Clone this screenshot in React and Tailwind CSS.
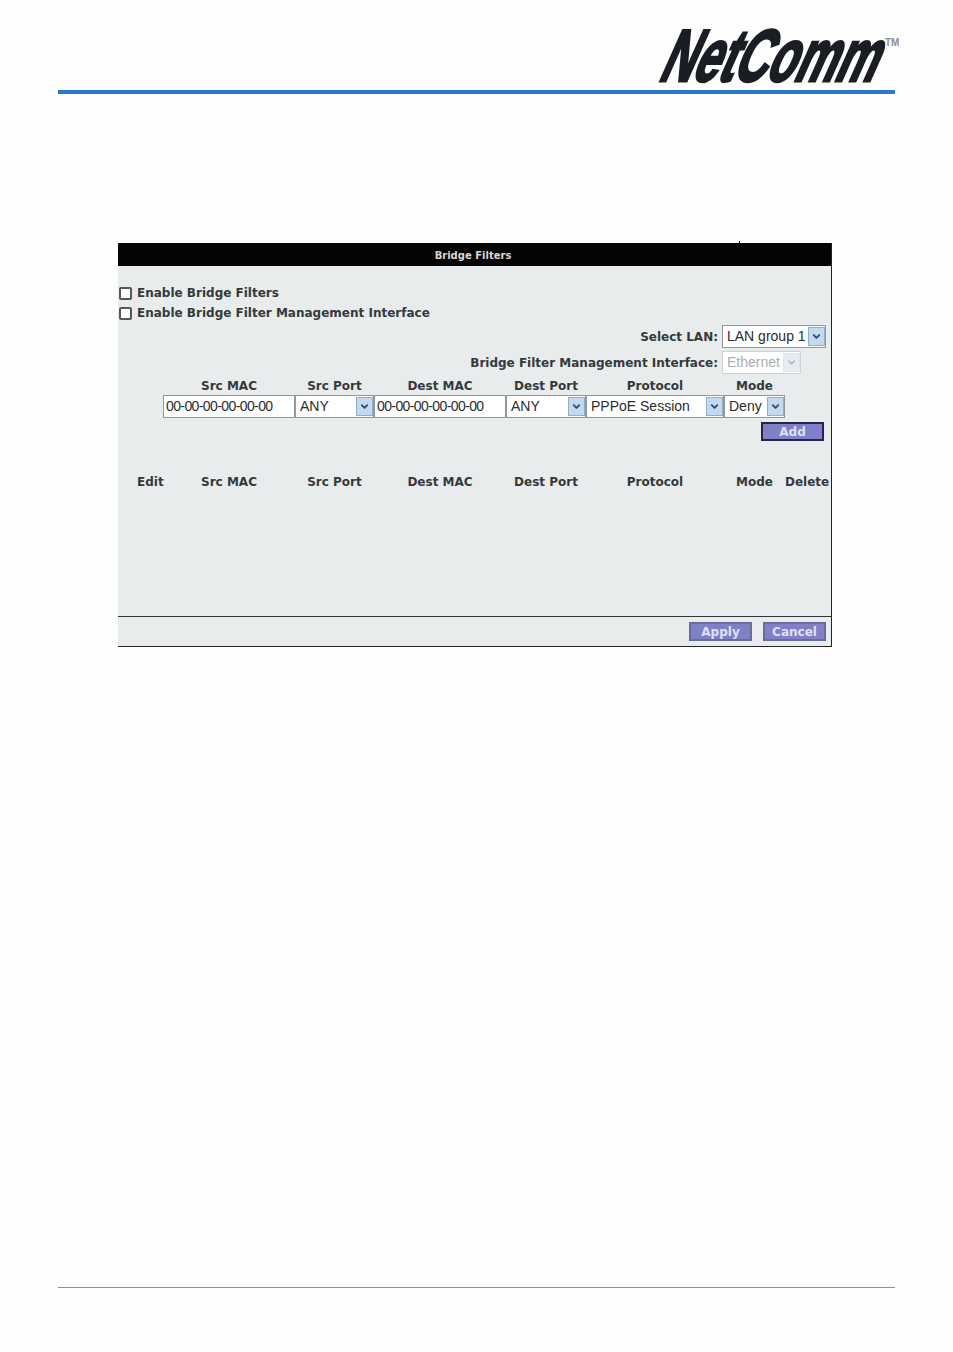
import { ChevronDown } from "lucide-react";

const heads = ["Src MAC", "Src Port", "Dest MAC", "Dest Port", "Protocol", "Mode"];

const Logo = () => (
    <svg width="241" height="56" viewBox="0 0 241 56" className="block overflow-visible">
        <text
            transform="translate(-2 54) skewX(-24) scale(0.61 0.98)"
            className="font-['Liberation_Sans'] font-bold fill-[#1a1d24] stroke-[#1a1d24]"
            fontSize="75"
            strokeWidth="3"
        >
            NetComm
        </text>
        <text x="226" y="19" className="font-['Liberation_Sans'] fill-[#8a8d90]" fontSize="10">TM</text>
    </svg>
);

const Arrow = ({ off }) => (
    <span className={`flex h-full w-[17px] shrink-0 items-center justify-center border ${off ? "border-[#dfe5e8] bg-[#e6edf2]" : "border-[#8fb0cc] bg-[#c3d9ee]"}`}>
        <ChevronDown size={11} strokeWidth={4} className={off ? "text-[#b4bcc2]" : "text-[#2b4a78]"} />
    </span>
);

const Select = ({ text, off, className }) => (
    <div className={`flex h-[23px] items-center border bg-white py-px pl-px font-['Liberation_Sans'] text-[14px] font-normal whitespace-nowrap ${off ? "border-[#cfd3d5] text-[#a8aeb2]" : "border-[#8e9aa0] text-[#2c2c2c]"} ${className}`}>
        <span className="flex-1 pl-[3px]">{text}</span>
        <Arrow off={off} />
    </div>
);

const MacInput = () => (
    <div className="flex h-[23px] items-center border border-[#8e9aa0] bg-white pl-[2px] font-['Liberation_Sans'] text-[14px] font-normal tracking-[-0.6px] text-[#2c2c2c]">
        00-00-00-00-00-00
    </div>
);

const Button = ({ label, className }) => (
    <button className={`h-[19px] border-2 bg-[#7f80c8] text-center text-[12px] leading-none font-bold text-[#dfe2f2] ${className}`}>
        {label}
    </button>
);

const Check = ({ label }) => (
    <label className="flex h-[20px] items-center gap-[5px]">
        <span className="ml-px h-[13px] w-[13px] rounded-[2px] border-2 border-[#55585a] bg-white" />
        {label}
    </label>
);

export default function App() {
    return (
        <div className="h-[1352px] bg-[#fefefe] px-[58px] font-['DejaVu_Sans'] text-[12px] font-bold text-[#343a3c]">
            <div className="flex h-[90px] items-end justify-end pb-[7px]">
                <div className="mr-[-5px]">
                    <Logo />
                </div>
            </div>
            <div className="h-1 bg-[#2d78c8]" />

            <div className="mt-[149px] ml-[60px] w-[714px] border-r border-b border-[#222] bg-[#e8ecec]">
                <div className="relative flex h-[23px] items-center justify-center bg-[#050505] pt-px pr-[3px] text-[10px] text-[#d8d8d8]">
                    Bridge Filters
                    <span className="absolute top-[-2px] left-[621px] h-[2px] w-px bg-black" />
                </div>

                <div className="flex h-[351px] flex-col border-b border-[#333]">
                    <div className="mt-[17px] flex flex-col">
                        <Check label="Enable Bridge Filters" />
                        <Check label="Enable Bridge Filter Management Interface" />
                    </div>

                    <div className="mt-[2px] flex h-[23px] items-center justify-end gap-1 pr-[5px]">
                        Select LAN:
                        <Select text="LAN group 1" className="w-[104px]" />
                    </div>
                    <div className="mt-[3px] flex h-[23px] items-center justify-end gap-1 pr-[30px]">
                        Bridge Filter Management Interface:
                        <Select text="Ethernet" off className="w-[79px]" />
                    </div>

                    <div className="mt-[3px] grid grid-cols-[45px_132px_79px_132px_80px_138px_61px_47px] items-center">
                        <span />
                        {heads.map((h) => (
                            <span key={h} className="text-center leading-[18px]">{h}</span>
                        ))}
                        <span />
                        <span />
                        <MacInput />
                        <Select text="ANY" />
                        <MacInput />
                        <Select text="ANY" />
                        <Select text="PPPoE Session" />
                        <Select text="Deny" />
                        <span />
                    </div>

                    <div className="mt-[4px] flex justify-end pr-[7px]">
                        <Button label="Add" className="w-[63px] border-[#23264a]" />
                    </div>

                    <div className="mt-[31px] grid grid-cols-[45px_132px_79px_132px_80px_138px_61px_47px] leading-[20px]">
                        <span className="pl-[19px]">Edit</span>
                        {heads.map((h) => (
                            <span key={h} className="text-center">{h}</span>
                        ))}
                        <span className="pr-1 text-center">Delete</span>
                    </div>
                </div>

                <div className="flex h-[29px] items-center justify-end gap-[11px] pr-[5px]">
                    <Button label="Apply" className="w-[63px] border-[#6a6d9a]" />
                    <Button label="Cancel" className="w-[63px] border-[#6a6d9a]" />
                </div>
            </div>

            <div className="mt-[640px] h-px bg-[#8a8f92]" />
        </div>
    );
}
